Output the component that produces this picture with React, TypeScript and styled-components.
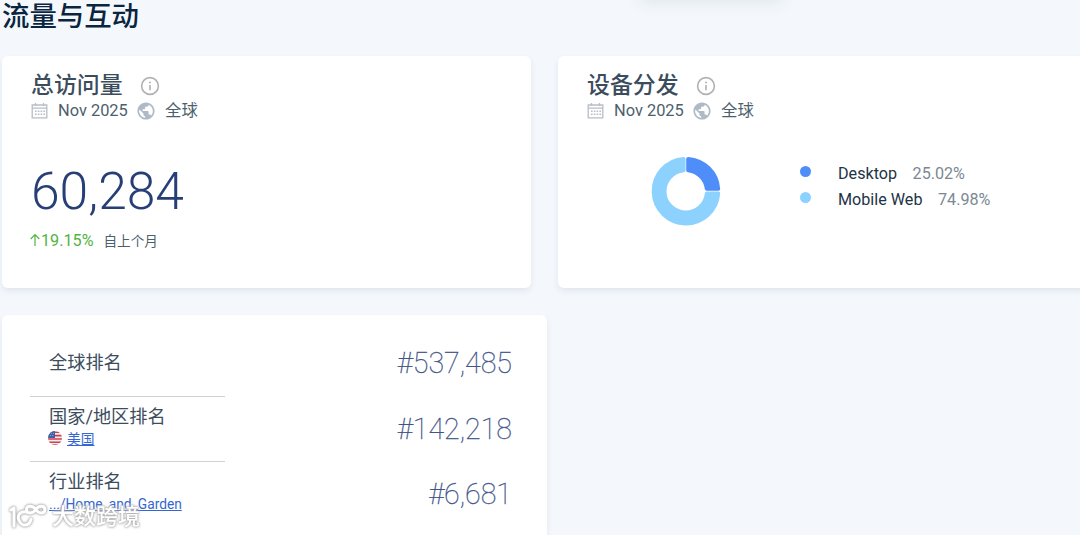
import * as React from 'react'
import styled, {createGlobalStyle} from 'styled-components'

const GlobalStyle = createGlobalStyle`
  * {
    box-sizing: border-box;
  }

  body {
    margin: 0;
    overflow: hidden;
    background: #f4f8fd;
    font-family: Roboto, "Noto Sans CJK SC", sans-serif;
    color: #3b4d5d;
  }
`

const Page = styled.main`
  position: relative;
  width: 1080px;
  height: 535px;
  padding-left: 2px;
  overflow: hidden;
`

const FloatingShadow = styled.div`
  position: absolute;
  left: 640px;
  top: -20px;
  width: 142px;
  height: 18px;
  box-shadow: 0 4px 16px rgba(20, 70, 60, 0.1);
`

const PageTitle = styled.h1`
  margin: 0;
  padding-top: 1px;
  height: 56px;
  font-size: 27.4px;
  line-height: 33px;
  font-weight: 500;
  color: #092540;
`

const CardRow = styled.div`
  display: flex;
  gap: 27px;
  margin-bottom: 27px;
`

const Card = styled.section<{ width: number, height: number }>`
  flex: none;
  width: ${({width}) => width}px;
  height: ${({height}) => height}px;
  padding: 17px 29px 0;
  border-radius: 6px;
  background: #fff;
  box-shadow: 0 3px 6px rgba(14, 30, 62, 0.08);
`

const CardHead = styled.div`
  display: flex;
  align-items: center;
  height: 26px;
`

const CardTitle = styled.h2`
  margin: 0 17px 0 0;
  font-size: 22.9px;
  line-height: 26px;
  font-weight: 500;
`

const InfoSvg = styled.svg`
  margin-bottom: 1px;
`

const Meta = styled.div`
  display: flex;
  align-items: center;
  height: 24px;
  font-size: 16.4px;
  line-height: 24px;
  color: #4d5f6d;

  svg {
    margin-top: -1px;
  }
`

const Period = styled.span`
  width: 79px;
  margin-left: 10px;
  white-space: nowrap;
`

const Region = styled.span`
  margin-left: 10px;
`

const Visits = styled.div`
  margin-top: 38px;
  font-size: 51.6px;
  line-height: 62px;
  font-weight: 300;
  color: #273f76;
`

const Change = styled.div`
  display: flex;
  align-items: center;
  height: 20px;
  margin: 7px 0 0 -1px;
  font-size: 16.2px;
  color: #52b443;
`

const ChangeNote = styled.span`
  margin-left: 10px;
  font-size: 13.6px;
  color: #4d5f6d;
`

const Devices = styled.div`
  display: flex;
  margin: 33px 0 0 64px;
`

const Legend = styled.ul`
  margin: 5px 0 0 79px;
  padding: 0;
  list-style: none;
`

const LegendItem = styled.li<{ color: string }>`
  display: flex;
  align-items: center;
  height: 25.6px;
  font-size: 16.15px;
  color: #1d3346;

  &::before {
    content: "";
    width: 11px;
    height: 11px;
    margin: -4px 27px 0 0;
    border-radius: 50%;
    background: ${({color}) => color};
  }
`

const Share = styled.span`
  margin-left: 15.5px;
  color: #7c8892;
`

const RankCard = styled(Card)`
  display: flex;
  justify-content: space-between;
  padding: 16px 35px 0 28px;
`

const Labels = styled.div`
  width: 195px;
`

const Label = styled.div<{ height: number, top: number }>`
  height: ${({height}) => height}px;
  padding: ${({top}) => top}px 0 0 19px;
  font-size: 18.2px;
  line-height: 26px;

  & + & {
    border-top: 1px solid #cbd2d8;
  }
`

const SubLine = styled.div`
  display: flex;
  align-items: center;
  height: 19px;
  font-size: 13.75px;
  line-height: 19px;
`

const FlagSvg = styled.svg`
  margin: -3px 5px 0 -1px;
`

const Link = styled.a`
  color: #3566cf;
  text-decoration: underline;
  cursor: pointer;
`

const Values = styled.div`
  padding-top: 15px;
  text-align: right;
`

const Value = styled.div`
  height: 65.5px;
  font-size: 28.6px;
  line-height: 34px;
  font-weight: 100;
  color: #3f5488;
  -webkit-text-stroke: 0.3px #3f5488;
`

const Watermark = styled.div`
  position: absolute;
  left: 8px;
  top: 498px;
  display: flex;
  align-items: center;
  font-size: 22px;
  line-height: 32px;
  font-weight: 500;
  color: #fff;
  filter: drop-shadow(0 0 1px #aaa) drop-shadow(0 0 1px #bbb);
`

const WatermarkText = styled.span`
  margin: 3px 0 0 5px;
`

const InfoIcon = () => (
  <InfoSvg width="20" height="20" viewBox="0 0 20 20" fill="none" stroke="#b1b1b1">
    <circle cx="10" cy="10" r="8.4" strokeWidth="1.6"/>
    <path d="M10 9v5.3" strokeWidth="1.6"/>
    <circle cx="10" cy="6.4" r="1" fill="#b1b1b1" stroke="none"/>
  </InfoSvg>
)

const CalendarIcon = () => (
  <svg width="17" height="17" viewBox="0 0 17 17" fill="none" stroke="#b6bec6">
    <path d="M1.2 3h14.6v12.8H1.2zM1 6.2h15M4.5 1v3M12.5 1v3" strokeWidth="1.3"/>
    <path d="M4 9.2h10M4 12.2h10" strokeWidth="1.6" strokeDasharray="1.6 1.2"/>
  </svg>
)

const GlobeIcon = () => (
  <svg width="18" height="18" viewBox="1.5 1.5 21 21" fill="#b0bac6">
    <path d="M12 2C6.48 2 2 6.48 2 12s4.48 10 10 10 10-4.48 10-10S17.52 2 12 2zm-1 17.93c-3.95-.49-7-3.85-7-7.93 0-.62.08-1.21.21-1.79L9 15v1c0 1.1.9 2 2 2v1.93zm6.9-2.54c-.26-.81-1-1.39-1.9-1.39h-1v-3c0-.55-.45-1-1-1H8v-2h2c.55 0 1-.45 1-1V7h2c1.1 0 2-.9 2-2v-.41c2.93 1.19 5 4.06 5 7.41 0 2.08-.8 3.97-2.1 5.39z"/>
  </svg>
)

const FlagIcon = () => (
  <FlagSvg width="14" height="14" viewBox="0 0 14 14">
    <clipPath id="flag"><circle cx="7" cy="7" r="7"/></clipPath>
    <g clipPath="url(#flag)">
      <path fill="#f1eef0" d="M0 0h14v14H0z"/>
      <path stroke="#d33c4c" strokeWidth="1.6" d="M0 1.2h14M0 4.6h14M0 8h14M0 11.2h14M0 14h14"/>
      <path fill="#3c62a8" d="M0 0h7v7H0z"/>
      <path stroke="#c5d4ed" strokeWidth=".7" strokeDasharray=".8 1.2" d="M1 2.3h6M0 4.5h6"/>
    </g>
  </FlagSvg>
)

const Donut = () => (
  <svg width="70" height="70" viewBox="0 0 70 70" strokeLinejoin="round" strokeWidth="4">
    <path fill="#8dd2ff" stroke="#8dd2ff" d="M32.6 2.9A32.3 32.3 0 1 0 67.2 37.4H55.8A21.2 21.2 0 1 1 32.6 14.2z"/>
    <path fill="#4f8df9" stroke="#4f8df9" d="M37.2 2.9A32.3 32.3 0 0 1 67.2 32.8H55.8A21.2 21.2 0 0 0 37.2 14.2z"/>
  </svg>
)

const WatermarkLogo = () => (
  <svg width="39" height="32" viewBox="0 0 39 32" fill="none" stroke="#fff" strokeWidth="3" strokeLinecap="round" strokeLinejoin="round">
    <path d="M3 10l3-2v18M19 12C11 11 9 16 11 20.5c3 6.500 10 6 12-1"/>
    <path d="M27.700 9.500C25 5 18.500 5 18.500 9.500S25 14 27.700 9.500S36.900 5 36.900 9.500S30.500 14 27.700 9.500z"/>
  </svg>
)

const devices = [
  { "key": "desktop", "name": "Desktop", "share": "25.02%", "color": "#4f8df9" },
  { "key": "mobile", "name": "Mobile Web", "share": "74.98%", "color": "#8dd2ff" },
]

const ranks = ["#537,485", "#142,218", "#6,681"]

const Header = ({title}: { title: string }) => (
  <>
    <CardHead>
      <CardTitle>{title}</CardTitle>
      <InfoIcon/>
    </CardHead>
    <Meta>
      <CalendarIcon/>
      <Period>Nov 2025</Period>
      <GlobeIcon/>
      <Region>全球</Region>
    </Meta>
  </>
)

const App = () => (
  <Page>
    <GlobalStyle/>
    <FloatingShadow/>
    <PageTitle>流量与互动</PageTitle>
    <CardRow>
      <Card width={529} height={232}>
        <Header title="总访问量"/>
        <Visits>60,284</Visits>
        <Change>
          <svg width="11" height="14" viewBox="0 0 11 14" fill="none" stroke="#52b443" strokeWidth="1.2">
            <path d="M5 13V2M.7 6L5 1.7 9.3 6"/>
          </svg>
          19.15%
          <ChangeNote>自上个月</ChangeNote>
        </Change>
      </Card>
      <Card width={540} height={232}>
        <Header title="设备分发"/>
        <Devices>
          <Donut/>
          <Legend>
            {devices.map(v => {
              return <LegendItem key={v.key} color={v.color}>{v.name}<Share>{v.share}</Share></LegendItem>
            })}
          </Legend>
        </Devices>
      </Card>
    </CardRow>
    <RankCard width={545} height={240}>
      <Labels>
        <Label height={65} top={19}>全球排名</Label>
        <Label height={65} top={7}>
          国家/地区排名
          <SubLine><FlagIcon/><Link>美国</Link></SubLine>
        </Label>
        <Label height={65} top={7}>
          行业排名
          <SubLine><Link>.../Home_and_Garden</Link></SubLine>
        </Label>
      </Labels>
      <Values>
        {ranks.map(v => <Value key={v}>{v}</Value>)}
      </Values>
    </RankCard>
    <Watermark>
      <WatermarkLogo/>
      <WatermarkText>大数跨境</WatermarkText>
    </Watermark>
  </Page>
)

export default App
